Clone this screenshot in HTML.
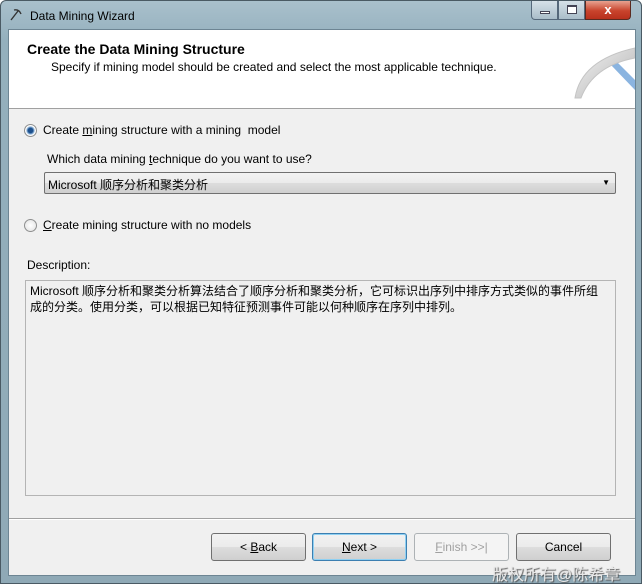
<!DOCTYPE html>
<html><head><style>
*{margin:0;padding:0;box-sizing:border-box}
body{width:644px;height:586px;background:#fff;font-family:"Liberation Sans","Noto Sans CJK SC",sans-serif;font-size:12px;color:#000;position:relative;overflow:hidden}
.frame{position:absolute;left:0;top:0;width:642px;height:584px;background:linear-gradient(#a9c0cc,#94b0bd 40px,#8fa9b6);border:1px solid #4a5a64;border-radius:6px 6px 0 0}
.client{position:absolute;left:8px;top:29px;width:628px;height:547px;background:#f0f0f0;border:1px solid #6d8593}
.hdr{position:absolute;left:0;top:0;width:626px;height:79px;background:#fff;border-bottom:1px solid #a0a0a0}
.abs{position:absolute;white-space:nowrap}
.btn{position:absolute;top:503px;height:28px;width:95px;border:1px solid #707070;border-radius:3px;background:linear-gradient(#f2f2f2,#ebebeb 50%,#dddddd 51%,#cfcfcf);text-align:center;line-height:26px;font-size:12px}
.radio{position:absolute;width:13px;height:13px;border-radius:50%;border:1px solid #8e8f8f;background:radial-gradient(#fff,#e0e0e0)}
</style></head><body>
<div class="frame">
 <svg class="abs" style="left:8px;top:7px" width="14" height="14" viewBox="0 0 14 14"><path d="M2 12 L9 3 M5 2 Q10 1 12 6" stroke="#333" stroke-width="1.4" fill="none"/></svg>
 <div class="abs" style="left:29px;top:8px;font-size:12px;color:#000">Data Mining Wizard</div>
 <div class="abs" style="left:530px;top:0;width:27px;height:19px;border:1px solid #55687a;border-top:none;border-radius:0 0 0 4px;background:linear-gradient(#d6e1e8,#a9bdc9)"><div style="position:absolute;left:8px;top:10px;width:10px;height:3px;border:1px solid #445;background:#fff"></div></div>
 <div class="abs" style="left:557px;top:0;width:27px;height:19px;border:1px solid #55687a;border-top:none;background:linear-gradient(#d6e1e8,#a9bdc9)"><div style="position:absolute;left:8px;top:4px;width:10px;height:9px;border:1px solid #445;border-top-width:2px;background:#fff"></div></div>
 <div class="abs" style="left:584px;top:0;width:46px;height:19px;border:1px solid #5a2a20;border-top:none;border-radius:0 0 4px 0;background:linear-gradient(#e8a290,#c8432c 55%,#b8301c);color:#fff;font-weight:bold;text-align:center;line-height:17px;font-size:13px">x</div>
</div>
<div class="client">
 <div class="hdr">
  <div class="abs" style="left:18px;top:11px;font-size:14px;font-weight:bold">Create the Data Mining Structure</div>
  <div class="abs" style="left:42px;top:30px;font-size:12px">Specify if mining model should be created and select the most applicable technique.</div>
  <svg class="abs" style="left:562px;top:10px" width="64" height="60" viewBox="0 0 64 60"><defs><linearGradient id="g" x1="0" y1="0" x2="1" y2="1"><stop offset="0" stop-color="#f4f4f4"/><stop offset="1" stop-color="#b0b0b0"/></linearGradient></defs><path d="M40 25 L64 50 L64 40 L46 22Z" fill="#8ab4e0"/><path d="M4 58 Q10 20 64 8 L64 18 Q22 26 10 58Z" fill="url(#g)" stroke="#c4c4c4"/></svg>
 </div>
 <div class="radio" style="left:15px;top:94px;background:radial-gradient(#1c4f8c 30%,#7fa8d0 45%,#fff 60%,#e0e0e0)"></div>
 <div class="abs" style="left:34px;top:93px">Create <u>m</u>ining structure with a mining&nbsp; model</div>
 <div class="abs" style="left:38px;top:122px">Which data mining <u>t</u>echnique do you want to use?</div>
 <div class="abs" style="left:35px;top:142px;width:572px;height:22px;border:1px solid #707070;border-radius:2px;background:linear-gradient(#f2f2f2,#ebebeb 50%,#dddddd 51%,#cfcfcf)"><span style="position:absolute;left:3px;top:3px">Microsoft 顺序分析和聚类分析</span><span style="position:absolute;right:5px;top:5px;font-size:8px">▼</span></div>
 <div class="radio" style="left:15px;top:189px"></div>
 <div class="abs" style="left:34px;top:188px"><u>C</u>reate mining structure with no models</div>
 <div class="abs" style="left:18px;top:228px">Description:</div>
 <div class="abs" style="left:16px;top:250px;width:591px;height:216px;border:1px solid #b4b4b4;background:#f0f0f0;white-space:normal;line-height:16px;padding:2px 14px 2px 4px">Microsoft 顺序分析和聚类分析算法结合了顺序分析和聚类分析，它可标识出序列中排序方式类似的事件所组成的分类。使用分类，可以根据已知特征预测事件可能以何种顺序在序列中排列。</div>
 <div class="abs" style="left:0;top:488px;width:626px;height:1px;background:#a0a0a0"></div>
 <div class="abs" style="left:0;top:489px;width:626px;height:1px;background:#fff"></div>
 <div class="btn" style="left:202px">&lt; <u>B</u>ack</div>
 <div class="btn" style="left:303px;border-color:#3c7fb1;box-shadow:inset 0 0 0 1px #8fd0f2"><u>N</u>ext &gt;</div>
 <div class="btn" style="left:405px;border-color:#adb2b5;background:#f4f4f4;color:#a0a0a0"><u>F</u>inish &gt;&gt;|</div>
 <div class="btn" style="left:507px">Cancel</div>
</div>
<div class="abs" style="left:492px;top:561px;font-size:16px;color:#e8e8e8;text-shadow:1px 1px 1px #555">版权所有@陈希章</div>
</body></html>
